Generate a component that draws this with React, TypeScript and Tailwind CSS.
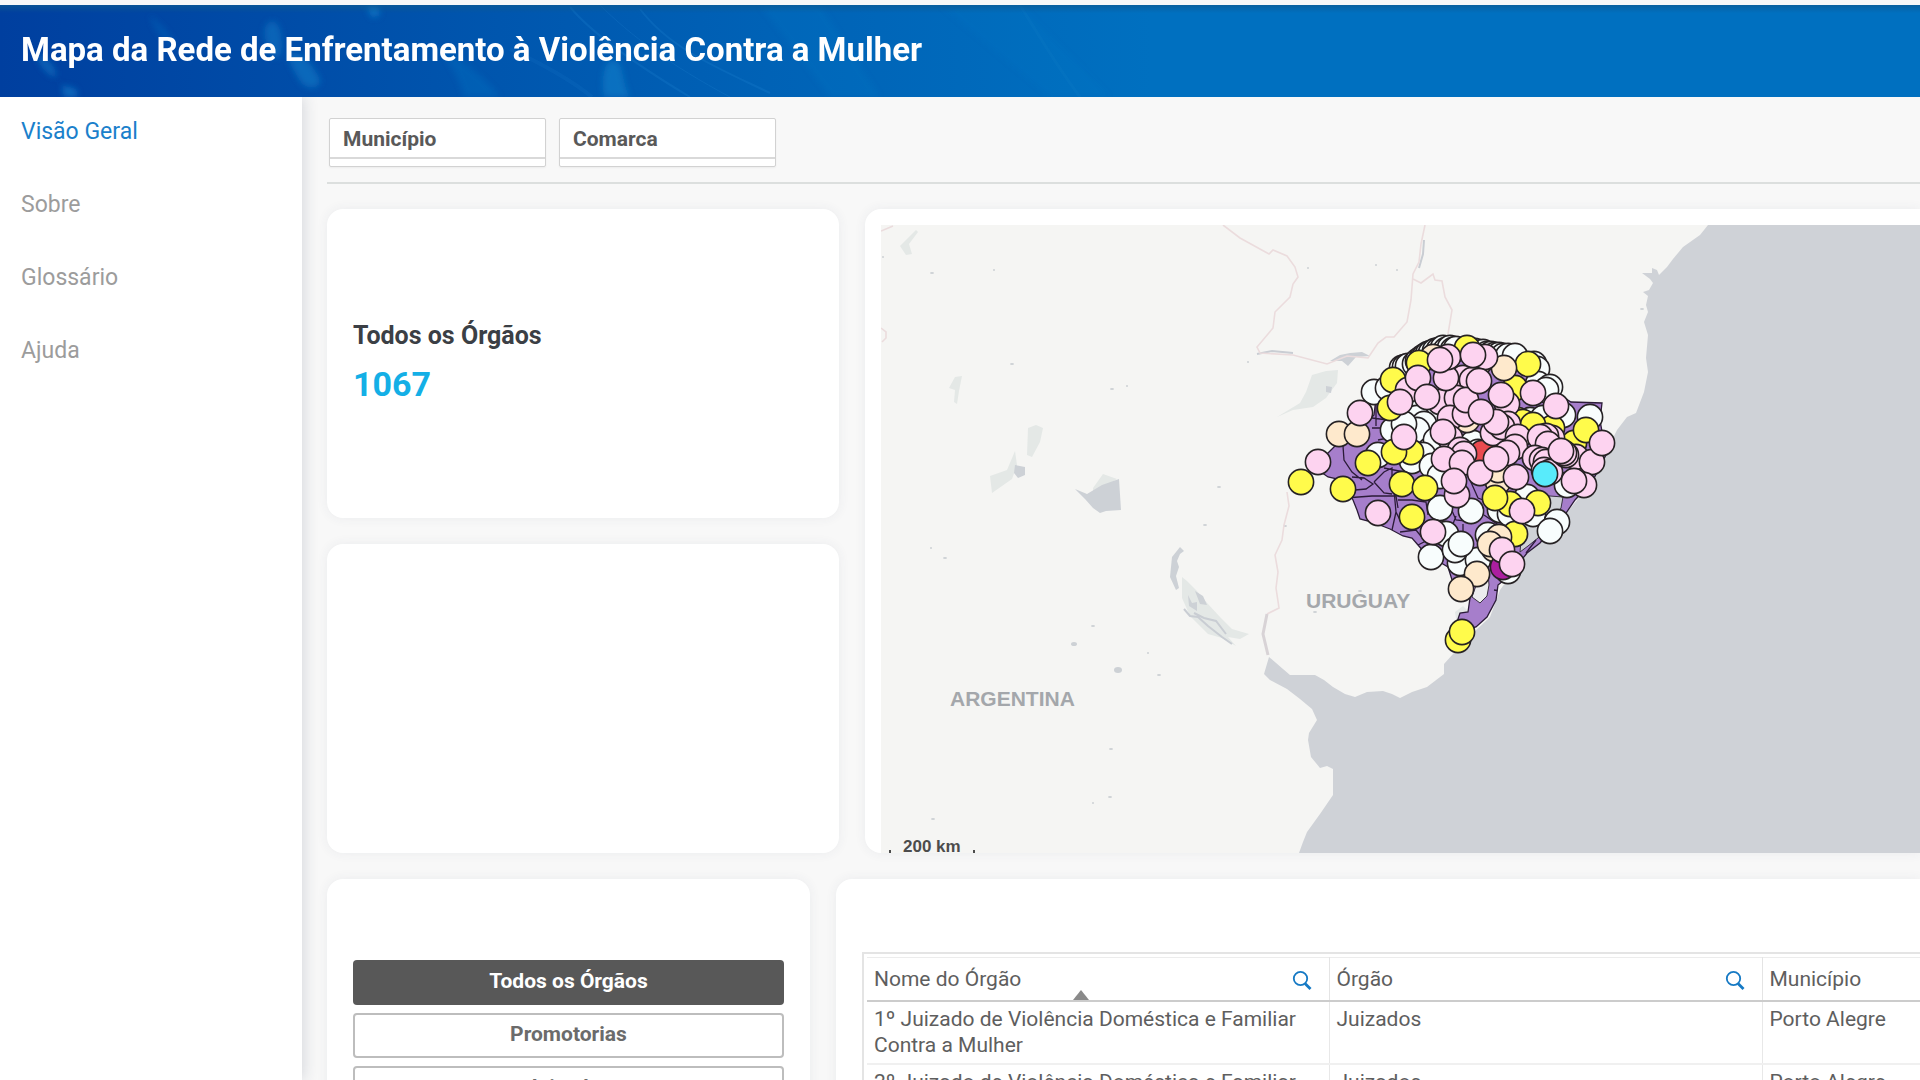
import type { ReactNode } from "react";

type Tone = "w" | "y" | "k" | "p" | "r" | "m" | "c";

const TONES: Record<Tone, string> = {
  w: "#f8fdfd",
  y: "#fffb4b",
  k: "#fee9cc",
  p: "#fdd3f0",
  r: "#ea4a50",
  m: "#ab1fa0",
  c: "#58ebfb",
};

const MARKERS: [Tone, number, number][] = [
  ["w", 1374, 392], ["w", 1388, 388], ["w", 1402, 368], ["w", 1405, 367], ["w", 1408, 366], ["w", 1415, 364],
  ["w", 1418, 361], ["w", 1422, 358], ["w", 1425, 356], ["w", 1428, 354], ["w", 1431, 353], ["w", 1435, 351],
  ["w", 1439, 350], ["w", 1443, 348], ["w", 1446, 350], ["w", 1450, 348], ["w", 1453, 350], ["w", 1456, 349],
  ["w", 1475, 351], ["w", 1479, 353], ["w", 1483, 352], ["w", 1487, 354], ["w", 1491, 354], ["w", 1495, 355],
  ["w", 1499, 355], ["w", 1503, 356], ["w", 1508, 356], ["w", 1515, 356], ["w", 1534, 364], ["w", 1537, 369],
  ["w", 1538, 384], ["w", 1550, 387], ["w", 1546, 390], ["w", 1563, 415], ["w", 1590, 417], ["w", 1420, 408],
  ["w", 1414, 412], ["w", 1428, 414], ["w", 1417, 418], ["w", 1424, 424], ["w", 1417, 430], ["w", 1393, 430],
  ["w", 1404, 424], ["w", 1430, 450], ["w", 1436, 440], ["w", 1378, 455], ["w", 1423, 455], ["w", 1412, 461],
  ["w", 1432, 466], ["w", 1440, 476], ["w", 1473, 443], ["w", 1478, 452], ["w", 1530, 420], ["w", 1543, 418],
  ["w", 1567, 485], ["w", 1527, 497], ["w", 1440, 508], ["w", 1471, 511], ["w", 1488, 535], ["w", 1500, 510],
  ["w", 1510, 514], ["w", 1533, 514], ["w", 1557, 522], ["w", 1550, 531], ["w", 1446, 534], ["w", 1431, 557],
  ["w", 1460, 563], ["w", 1478, 560], ["w", 1508, 571], ["w", 1455, 550], ["w", 1461, 544],
  ["k", 1433, 357], ["k", 1480, 362], ["y", 1419, 363], ["y", 1467, 348], ["y", 1528, 364], ["y", 1515, 388],
  ["k", 1504, 368], ["k", 1467, 420], ["y", 1518, 420], ["y", 1523, 422], ["y", 1552, 428],
  ["y", 1533, 425], ["y", 1574, 443], ["y", 1586, 430], ["y", 1393, 380], ["y", 1390, 408], ["y", 1411, 452],
  ["y", 1394, 452], ["k", 1339, 434], ["k", 1357, 434], ["y", 1368, 463], ["y", 1301, 482], ["y", 1343, 489],
  ["y", 1402, 484], ["y", 1425, 488], ["y", 1412, 517], ["k", 1498, 482], ["k", 1498, 470], ["y", 1510, 504],
  ["y", 1495, 498], ["y", 1538, 503], ["y", 1515, 534], ["k", 1499, 537], ["k", 1494, 549], ["k", 1490, 544],
  ["r", 1482, 453],
  ["p", 1408, 390], ["p", 1463, 378], ["p", 1472, 380], ["p", 1440, 402], ["p", 1457, 398], ["p", 1450, 418],
  ["p", 1465, 414], ["p", 1418, 378], ["p", 1446, 378], ["p", 1427, 397], ["p", 1400, 402], ["p", 1448, 357],
  ["p", 1440, 360], ["p", 1485, 357], ["p", 1473, 355], ["p", 1466, 400], ["p", 1479, 381], ["p", 1507, 404],
  ["p", 1501, 395], ["p", 1508, 424], ["p", 1493, 433], ["p", 1502, 427], ["p", 1496, 422], ["p", 1481, 412],
  ["p", 1518, 437], ["p", 1533, 393], ["p", 1556, 406], ["p", 1404, 437], ["p", 1450, 438], ["p", 1443, 432],
  ["p", 1460, 450], ["p", 1464, 454], ["p", 1444, 459], ["p", 1462, 463], ["p", 1480, 473], ["p", 1515, 447],
  ["p", 1507, 453], ["p", 1496, 459], ["p", 1516, 477], ["p", 1552, 438], ["p", 1546, 436], ["p", 1540, 437],
  ["p", 1548, 444], ["p", 1535, 458], ["p", 1542, 460], ["p", 1546, 462], ["p", 1544, 470], ["p", 1550, 472],
  ["p", 1576, 457], ["p", 1592, 462], ["p", 1566, 455], ["p", 1564, 453], ["p", 1561, 451], ["p", 1602, 443],
  ["p", 1584, 485], ["p", 1574, 481], ["p", 1457, 495], ["p", 1454, 481], ["p", 1522, 511], ["p", 1360, 413],
  ["p", 1318, 462], ["p", 1378, 513], ["p", 1433, 532], ["m", 1503, 567], ["p", 1502, 550], ["p", 1512, 564],
  ["k", 1477, 574], ["k", 1461, 589], ["y", 1458, 640], ["y", 1462, 632], ["c", 1545, 474],
];

const SPECKS: [number, number, number][] = [
  [932, 273, 2], [883, 257, 1], [994, 270, 1], [1012, 364, 2], [1112, 389, 2], [1127, 386, 1], [1248, 362, 1],
  [1219, 487, 2], [1205, 525, 2], [931, 548, 1], [945, 558, 2], [1093, 626, 2], [1074, 644, 3], [1148, 653, 1],
  [1118, 670, 4], [1159, 675, 2], [1111, 749, 2], [1110, 797, 2], [1093, 803, 1], [933, 819, 2], [1376, 265, 1],
  [1397, 270, 1], [1308, 268, 1], [1285, 526, 2], [1642, 309, 2], [1315, 612, 2], [1360, 591, 2],
];

const STATE_OUTLINE =
  "M1318 470L1328 477 1342 480 1353 500 1357 510 1360 519 1372 522 1390 529 1403 536 1412 538 1418 545 1424 552 1436 560 1448 567 1452 580 1462 590 1470 598 1468 612 1460 613 1457 622 1465 630 1476 627 1487 617 1496 600 1498 585 1510 575 1527 553 1540 543 1550 531 1564 516 1575 500 1592 482 1606 455 1600 420 1602 403 1571 402 1560 395 1535 365 1500 350 1450 340 1400 370 1376 398 1374 415 1357 432 1335 446 1326 455Z";

const FILTERS = ["Município", "Comarca"];
const NAV = ["Visão Geral", "Sobre", "Glossário", "Ajuda"];
const GROUPS = ["Todos os Órgãos", "Promotorias", "Juizados"];
const ROWS = [
  ["1º Juizado de Violência Doméstica e Familiar Contra a Mulher", "Juizados", "Porto Alegre"],
  ["2º Juizado de Violência Doméstica e Familiar Contra a Mulher", "Juizados", "Porto Alegre"],
];

function Card({ className, children }: { className?: string; children?: ReactNode }) {
  return (
    <section className={`rounded-2xl bg-white shadow-[0_0_12px_rgba(60,70,100,0.07)] ${className ?? ""}`}>
      {children}
    </section>
  );
}

function SearchIcon() {
  return (
    <svg viewBox="0 0 20 20" className="mt-[3px] block size-5" fill="none" stroke="#1579c4" aria-hidden="true">
      <circle cx="8.5" cy="8.5" r="6.7" strokeWidth="1.8" />
      <path d="M13 13.5 18.5 19" strokeWidth="2.8" />
    </svg>
  );
}

function HeaderArt() {
  return (
    <svg
      className="absolute inset-0 h-full w-full"
      viewBox="0 0 1920 92"
      preserveAspectRatio="xMinYMin slice"
      aria-hidden="true"
    >
      <defs>
        <linearGradient id="haze" x1="0" x2="0" y1="0" y2="1">
          <stop offset="0" stopColor="#0e5a90" stopOpacity="0.7" />
          <stop offset="1" stopColor="#0e5a90" stopOpacity="0" />
        </linearGradient>
        <filter id="soft">
          <feGaussianBlur stdDeviation="3" />
        </filter>
      </defs>
      <g fill="#1590d8" filter="url(#soft)">
        <path d="M268 18c8-6 14 4 14 22s-10 16-14 4-6-20 0-26z" opacity=".35" />
        <path d="M290 48c14-2 22 12 30 26 2 10-14 12-20 2s-14-22-10-28z" opacity=".4" />
        <path d="M366 0h12l2 10-8 3z" opacity=".5" />
        <path d="M36 48c8 2 22 14 20 24-8 0-18-12-20-24z" opacity=".4" />
        <path d="M62 80l14 4 2 8H64z" opacity=".5" />
        <path d="M604 92c-4-28 4-40 12-36s6 22 14 36z" opacity=".4" />
        <path d="M440 40c14 12 40 26 60 52h-36c-4-20-18-36-24-52z" opacity=".18" />
        <path d="M150 10c14 12 24 22 26 34-14-8-24-22-26-34z" opacity=".2" />
        <path d="M940 0h80l90 92h-60z" opacity=".07" />
        <path d="M760 0h60l60 92h-50z" opacity=".1" />
      </g>
      <g fill="none" stroke="#2b93dc" opacity=".18">
        <path d="M570 2c20 24 60 54 120 90" strokeWidth="2" />
        <path d="M600 0c30 30 70 60 130 92" />
        <path d="M1020 0c16 26 36 60 60 92" strokeWidth="3" opacity=".5" />
        <path d="M510 44c30 14 60 30 82 48" strokeWidth="4" opacity=".6" />
        <path d="M640 4c30 40 80 60 130 84" strokeWidth="2" />
      </g>
      <rect width="3000" height="8" fill="url(#haze)" />
    </svg>
  );
}

function RegionMap() {
  return (
    <svg
      className="block h-[628px] w-full bg-[#f5f5f3]"
      viewBox="881 225 1039 628"
      preserveAspectRatio="xMinYMin slice"
      role="img"
      aria-label="Mapa dos órgãos no Rio Grande do Sul"
    >
      <defs>
        <clipPath id="state">
          <path d={STATE_OUTLINE} />
        </clipPath>
      </defs>
      <path
        fill="#cfd2d7"
        d="M1708 225L1700 235 1683 247 1673 259 1667 267 1659 275 1657 270 1652 268 1652 273 1642 273 1650 279 1653 283 1649 290 1643 292 1648 296 1646 305 1648 312 1644 322 1648 335 1646 358 1648 372 1644 392 1636 413 1627 417 1617 430 1612 440 1606 455 1592 482 1564 516 1527 553 1500 590 1490 617 1473 633 1453 654 1444 664 1444 674 1427 687 1412 692 1400 698 1392 694 1383 691 1367 692 1355 697 1345 694 1333 687 1324 680 1315 675 1290 675 1283 669 1269 657 1264 674 1270 680 1287 689 1300 699 1312 709 1317 720 1309 733 1308 740 1311 757 1320 768 1327 766 1333 769 1333 795 1320 814 1307 832 1303 842 1299 853H2600V225z"
      />
      <g fill="#e4e8e6">
        <path d="M1028 428l8-3 7 3-3 14-8 15-5-2zM990 476l17-6 8-19 2 14-5 14-20 14zM1093 488l10-14 14 5-24 16zM955 377l7-1-3 15-2 13-3-2 1-12-6-2zM900 246l8-8 8-8 2 2-9 12 3 10-6 1z" />
        <path d="M1182 577L1187 581 1196 590 1208 604 1220 617 1232 629 1249 634 1240 639 1228 637 1236 646 1222 638 1208 634 1190 616 1182 598zM1312 375L1326 371 1338 370 1337 383 1326 398 1313 407 1293 410 1277 417 1300 403 1306 392z" />
        <path d="M1455 612l8-6 6 6-12 12z" />
      </g>
      <g fill="#cdd1d6">
        <path d="M1075 489L1087 494 1102 485 1119 479 1121 510 1106 511 1100 513 1093 508 1085 499zM1015 465l10 2v8l-7 3-4-5zM1180 547L1172 557 1170 577 1176 590 1179 588 1176 576 1179 567 1177 561 1180 554 1184 551zM1195 591L1203 596 1207 605 1200 604zM1188 595l4 8 5-1v9l-8-5zM1330 361l10-6 10-2 12-1 8 4-14 1-8 9-6-5zM1326 386l6 1-1 6-5-1z" />
      </g>
      <path
        fill="none"
        stroke="#c9cdd3"
        strokeWidth="2"
        d="M1184 609L1190 616 1198 617 1208 626 1222 637 1232 644M1194 613L1204 618 1216 621 1226 634M1257 354L1272 351 1293 353M1424 240L1423 254 1419 268"
      />
      <g fill="#cdd1d5">
        {SPECKS.map(([x, y, r]) => (
          <ellipse key={`${x}-${y}`} cx={x} cy={y} rx={r} ry={Math.max(1, r - 1)} />
        ))}
      </g>
      <g fill="none" stroke="#ebdcdd" strokeWidth="1.6">
        <path d="M1223 225L1240 238 1269 254 1273 250 1287 256 1295 267 1298 277 1293 284 1290 297 1275 312 1273 328 1257 347 1260 353 1293 355 1327 364 1347 356 1368 358 1378 343 1386 337 1394 337 1407 322 1411 300 1413 274 1419 262 1421 244 1425 225" />
        <path d="M1413 279L1421 283 1433 274 1435 280 1442 281 1445 297 1452 310 1448 334M881 328l5 4v6l-4 4M881 231l12-5" />
        <path d="M1287 492L1289 506 1284 525 1282 540 1275 555 1278 572 1276 588 1279 608 1267 614" />
        <path d="M1267 614L1263 634 1268 655" stroke="#d8d3d6" strokeWidth="3" />
      </g>

      <path fill="#a67ecb" stroke="#2b1b38" strokeWidth="1.3" d={STATE_OUTLINE} />
      <g fill="#cfd2d7" stroke="#3a3344">
        <path d="M1537 495L1563 497 1561 508 1552 520 1538 538 1528 546 1520 552 1522 530 1532 514z" />
        <path d="M1472 597L1480 603 1487 596 1489 585 1488 572 1478 580z" fill="#ececee" />
      </g>
      <g fill="none" stroke="#2b1b38" strokeWidth="1.3" clipPath="url(#state)">
        <path d="M1343 446L1344 460 1352 472 1362 480M1355 490L1366 489 1373 484 1364 478 1352 477M1374 482L1384 493 1392 494M1374 482L1384 472 1392 468 1392 478M1345 498L1372 496 1396 496 1398 508M1398 500L1412 500 1426 502 1428 515M1396 512L1392 530M1372 428L1384 428 1388 438 1378 440M1372 418L1388 420M1376 400V426M1384 468L1404 472 1424 468 1444 476M1436 500L1450 506 1456 520 1474 522M1456 516L1450 532 1456 540M1452 500L1466 498 1472 524M1494 590L1500 591M1394 490L1396 512 1402 524" />
        <path d="M1400 532L1416 530 1424 540M1418 545L1428 540M1470 480L1478 498 1494 504M1463 524V542M1484 515L1500 526 1510 522M1526 553L1536 540" />
      </g>

      <g stroke="#262224" strokeWidth="1.6">
        {MARKERS.map(([tone, x, y], i) => (
          <circle key={i} cx={x} cy={y} r="12.6" fill={TONES[tone]} />
        ))}
      </g>

      <g fontFamily="'Liberation Sans', sans-serif" fontWeight="700" fontSize="21" fill="#a4a7ab">
        <text x="1306" y="608">URUGUAY</text>
        <text x="950" y="706">ARGENTINA</text>
      </g>
      <text x="903" y="852" fontFamily="'Liberation Sans', sans-serif" fontWeight="700" fontSize="17" fill="#4c4c4c">
        200 km
      </text>
      <path d="M889 850h2v3h-2zM973 850h2v3h-2z" fill="#4c4c4c" />
    </svg>
  );
}

export default function App() {
  return (
    <div className="flex h-screen flex-col overflow-hidden bg-[#f8f8f8] font-['Roboto',sans-serif] text-[#595959]">
      <header className="relative mt-[5px] flex h-[92px] shrink-0 items-center bg-linear-to-r from-[#003f9f] via-[#0062b6] via-40% to-[#0070c0] to-60% px-[21px]">
        <HeaderArt />
        <h1 className="relative pb-[3px] text-[33px] leading-10 font-bold text-white">
          Mapa da Rede de Enfrentamento à Violência Contra a Mulher
        </h1>
      </header>

      <div className="flex min-h-0 flex-1">
        <nav className="w-[302px] shrink-0 bg-white px-[21px] pt-[19px] shadow-[2px_0_14px_rgba(40,50,80,0.16)]">
          <ul className="flex flex-col gap-[41px]">
            {NAV.map((item, i) => (
              <li key={item}>
                <a
                  href="#"
                  className={
                    i === 0
                      ? "block text-[23px] leading-8 text-[#1a80cb]"
                      : "block text-[23px] leading-8 text-[#9c9c9c]"
                  }
                >
                  {item}
                </a>
              </li>
            ))}
          </ul>
        </nav>

        <main className="min-w-0 flex-1 pl-[25px]">
          <div className="flex h-[87px] gap-[13px] border-b-2 border-[#dcdfde] pt-[21px] pl-[2px]">
            {FILTERS.map((name) => (
              <button
                key={name}
                type="button"
                className="h-[49px] w-[217px] rounded-xs border border-[#d2d2d2] bg-white text-left shadow-xs"
              >
                <span className="block h-[40px] border-b-2 border-[#d9d9d9] px-[13px] text-[21px] leading-[40px] font-bold">
                  {name}
                </span>
                <span className="block h-[7px]" />
              </button>
            ))}
          </div>

          <div className="mt-[25px] flex gap-[26px]">
            <div className="flex w-[512px] shrink-0 flex-col gap-[26px]">
              <Card className="flex h-[309px] flex-col justify-center px-[26px]">
                <h2 className="text-[25px] leading-8 font-bold text-[#3b3f45]">Todos os Órgãos</h2>
                <p className="mt-2 text-[34px] leading-12 font-bold text-[#14afe6]">1067</p>
              </Card>
              <Card className="h-[309px]" />
            </div>
            <Card className="min-w-0 flex-1 rounded-r-none pt-4 pl-4">
              <RegionMap />
            </Card>
          </div>

          <div className="mt-[26px] flex gap-[26px]">
            <Card className="flex w-[483px] shrink-0 flex-col gap-2 px-[26px] pt-[81px]">
              {GROUPS.map((name, i) => (
                <button
                  key={name}
                  type="button"
                  className={
                    i === 0
                      ? "h-[45px] rounded-sm bg-[#585858] pb-0.5 text-[21px] font-bold text-white"
                      : "h-[45px] rounded-sm border-2 border-[#bdbdbd] bg-white pb-0.5 text-[21px] font-bold text-[#6b6b6b]"
                  }
                >
                  {name}
                </button>
              ))}
            </Card>
            <Card className="min-w-0 flex-1 rounded-r-none pt-[73px] pl-[26px]">
              <div className="border-t-2 border-l-2 border-[#e4e4e4] pt-[3px] pl-[3px]">
                <table className="w-full table-fixed border-collapse border-t border-[#ececec] text-[21px] leading-[26px] text-[#5e5e5e]">
                  <colgroup>
                    <col className="w-[462px]" />
                    <col className="w-[433px]" />
                    <col />
                  </colgroup>
                  <thead>
                    <tr className="h-[43px] border-b-2 border-[#cccccc]">
                      <th className="relative border-r border-[#e4e4e4] px-[7px] text-left font-normal">
                        <div className="flex items-center justify-between pr-2.5">
                          Nome do Órgão
                          <button type="button" aria-label="Pesquisar Nome do Órgão">
                            <SearchIcon />
                          </button>
                        </div>
                        <span className="absolute bottom-0 left-[206px] border-x-8 border-b-10 border-x-transparent border-b-[#8a8a8a]" />
                      </th>
                      <th className="border-r border-[#e4e4e4] px-[7px] text-left font-normal">
                        <div className="flex items-center justify-between pr-2.5">
                          Órgão
                          <button type="button" aria-label="Pesquisar Órgão">
                            <SearchIcon />
                          </button>
                        </div>
                      </th>
                      <th className="px-[7px] text-left font-normal">Município</th>
                    </tr>
                  </thead>
                  <tbody>
                    {ROWS.map((row) => (
                      <tr key={row[0]} className="border-b-2 border-[#f0f0f0] align-top">
                        {row.map((cell, i) => (
                          <td
                            key={i}
                            className={
                              i < 2 ? "border-r border-[#e8e8e8] px-[7px] pt-1 pb-[5px]" : "px-[7px] pt-1 pb-[5px]"
                            }
                          >
                            {cell}
                          </td>
                        ))}
                      </tr>
                    ))}
                  </tbody>
                </table>
              </div>
            </Card>
          </div>
        </main>
      </div>
    </div>
  );
}
